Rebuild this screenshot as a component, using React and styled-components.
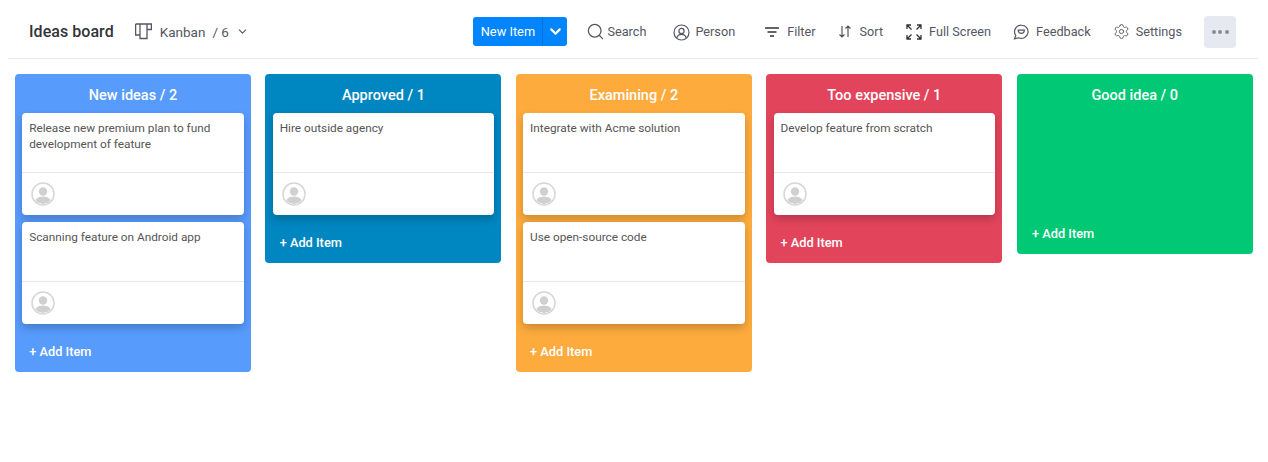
import React from "react";
import styled, { createGlobalStyle } from "styled-components";
import { ChevronDown, Search, Settings } from "lucide-react";

const GlobalStyle = createGlobalStyle`
  body {
    margin: 0;
    background: #fff;
    font-family: Roboto, "Liberation Sans", sans-serif;
  }
`;

const Page = styled.div`
  width: 1268px;
  height: 462px;
  overflow: hidden;
`;

const Header = styled.header`
  display: flex;
  align-items: center;
  height: 53px;
  margin: 0 10px 0 8px;
  padding: 5px 0 0 21px;
  border-bottom: 1px solid #e6e9ef;
`;

const Title = styled.h1`
  margin: 0 21px 0 0;
  font-size: 16px;
  font-weight: 500;
  color: #323338;
  letter-spacing: 0.05px;
`;

const ViewPicker = styled.div`
  display: flex;
  align-items: center;
  gap: 8px;
  font-size: 13.5px;
  color: #555663;
`;

const ViewCount = styled.span`
  margin: 0 -1px;
`;

const Actions = styled.div`
  display: flex;
  align-items: center;
  margin-left: auto;
`;

const NewItem = styled.div`
  display: flex;
  height: 29px;
  margin-right: 19px;
  border-radius: 3px;
  background: #0085ff;
  color: #fff;
  font-size: 12.8px;
`;

const NewItemLabel = styled.span`
  box-sizing: border-box;
  display: flex;
  align-items: center;
  justify-content: center;
  width: 70px;
  border-right: 1px solid #0073db;
`;

const NewItemCaret = styled.span`
  display: flex;
  align-items: center;
  justify-content: center;
  width: 24px;
`;

const Action = styled.div`
  display: flex;
  align-items: center;
  gap: ${p => p.$gap}px;
  margin-right: ${p => p.$space}px;
  font-size: 12.7px;
  color: #555663;
  white-space: nowrap;
`;

const MoreButton = styled.div`
  display: flex;
  align-items: center;
  justify-content: center;
  gap: 2.5px;
  width: 32px;
  height: 32px;
  margin-right: 22px;
  border-radius: 4px;
  background: #e6e9ef;
`;

const Dot = styled.span`
  width: 4px;
  height: 4px;
  border-radius: 50%;
  background: #8a8c99;
`;

const Board = styled.main`
  display: flex;
  align-items: flex-start;
  gap: 14.45px;
  padding: 15px 0 0 15px;
`;

const Column = styled.section`
  box-sizing: border-box;
  width: 236px;
  padding: 0 7.2px;
  border-radius: 4px;
  background: ${p => p.$color};
`;

const ColumnTitle = styled.h2`
  margin: 0;
  height: 39px;
  line-height: 44px;
  text-align: center;
  font-size: 14.5px;
  font-weight: 500;
  color: #fff;
`;

const CardList = styled.div`
  display: flex;
  flex-direction: column;
  gap: 7px;
  min-height: ${p => (p.$empty ? "100px" : "auto")};
`;

const Card = styled.article`
  display: flex;
  flex-direction: column;
  height: 102px;
  border-radius: 4px;
  background: #fff;
  box-shadow: 0 4px 8px rgba(0, 0, 0, 0.2);
`;

const CardText = styled.p`
  box-sizing: border-box;
  height: 60px;
  margin: 0;
  padding: 7px 7px 0;
  border-bottom: 1px solid #e6e9ef;
  font-size: 11.8px;
  line-height: 16px;
  color: #555;
`;

const CardFooter = styled.div`
  display: flex;
  align-items: center;
  flex: 1;
  padding-left: 9px;
`;

const AddItem = styled.div`
  box-sizing: border-box;
  display: flex;
  align-items: center;
  height: ${p => (p.$empty ? "41px" : "48px")};
  padding: ${p => (p.$empty ? "0 0 0 8px" : "7px 0 0 7px")};
  font-size: 12.8px;
  font-weight: 500;
  color: #fff;
`;

const PersonGlyph = styled.svg`
  margin-top: 2px;
`;

const icon = { fill: "none", stroke: "#555663", strokeWidth: 1.2 };

const KanbanIcon = () => (
  <svg width="17" height="17" viewBox="0 0 17 17" {...icon} strokeWidth="1.3">
    <path d="M.6 1h15.800v5.500H12M.6 1v11H5M5 1v14.500h7V1" />
  </svg>
);

const PersonIcon = () => (
  <PersonGlyph width="17" height="17" viewBox="0 0 17 17" {...icon}>
    <circle cx="8.5" cy="8.5" r="7.5" />
    <circle cx="8.5" cy="7" r="2.6" />
    <path d="M3.8 14c.6-2.4 2.4-3.6 4.7-3.600s4.100 1.200 4.700 3.600" />
  </PersonGlyph>
);

const FilterIcon = () => (
  <svg width="16" height="14" viewBox="0 0 16 14" stroke="#323338" strokeWidth="1.6">
    <path d="M1 3h14M3.500 7h9M6 11h4" />
  </svg>
);

const SortIcon = () => (
  <svg width="14" height="15" viewBox="0 0 14 15" {...icon}>
    <path d="M4 2v11M1.500 10.500 4 13l2.500-2.500M10 13V2M7.500 4.500 10 2l2.500 2.500" />
  </svg>
);

const FullScreenIcon = () => (
  <svg width="16" height="16" viewBox="0 0 16 16" fill="none" stroke="#323338" strokeWidth="1.3">
    <path d="M1 5V1h4M1 1l4.500 4.500M11 1h4v4M15 1l-4.500 4.500M1 11v4h4M1 15l4.500-4.500M15 11v4h-4M15 15l-4.500-4.500" />
  </svg>
);

const FeedbackIcon = () => (
  <svg width="16" height="16" viewBox="0 0 16 16" {...icon}>
    <path d="M8.500 1.200a6.600 6.600 0 1 1-2.800 12.600L1.500 14.800l1.300-3.200A6.600 6.600 0 0 1 8.500 1.200z" />
    <path d="M5.200 6.200h6.200c-.2 2-1.400 3.200-3.100 3.200S5.400 8.200 5.200 6.200z" />
  </svg>
);

const Avatar = () => (
  <svg width="24" height="24" viewBox="0 0 24 24">
    <defs>
      <clipPath id="avatar-clip">
        <circle cx="12" cy="12" r="10" />
      </clipPath>
    </defs>
    <circle cx="12" cy="12" r="11" fill="#fff" stroke="#d6d6d6" strokeWidth="1.5" />
    <g clipPath="url(#avatar-clip)" fill="#d0d0d0">
      <circle cx="12" cy="9.500" r="4.200" />
      <path d="M3 24c0-6 3-9.500 9-9.500s9 3.500 9 9.500z" />
    </g>
  </svg>
);

const columns = [
  {
    title: "New ideas / 2",
    color: "#579bfc",
    cards: ["Release new premium plan to fund development of feature", "Scanning feature on Android app"]
  },
  { title: "Approved / 1", color: "#0086c0", cards: ["Hire outside agency"] },
  {
    title: "Examining / 2",
    color: "#fdab3d",
    cards: ["Integrate with Acme solution", "Use open-source code"]
  },
  { title: "Too expensive / 1", color: "#e2445c", cards: ["Develop feature from scratch"] },
  { title: "Good idea / 0", color: "#00c875", cards: [] }
];

export default function App() {
  return (
    <Page>
      <GlobalStyle />
      <Header>
        <Title>Ideas board</Title>
        <ViewPicker>
          <KanbanIcon />
          Kanban
          <ViewCount>/ 6</ViewCount>
          <ChevronDown size={13} color="#555663" />
        </ViewPicker>
        <Actions>
          <NewItem>
            <NewItemLabel>New Item</NewItemLabel>
            <NewItemCaret>
              <ChevronDown size={17} strokeWidth={3} color="#fff" />
            </NewItemCaret>
          </NewItem>
          <Action $space={27} $gap={2}>
            <Search size={19} color="#555663" strokeWidth={1.6} />
            Search
          </Action>
          <Action $space={29} $gap={5}>
            <PersonIcon />
            Person
          </Action>
          <Action $space={22} $gap={7}>
            <FilterIcon />
            Filter
          </Action>
          <Action $space={23} $gap={8}>
            <SortIcon />
            Sort
          </Action>
          <Action $space={22} $gap={7}>
            <FullScreenIcon />
            Full Screen
          </Action>
          <Action $space={22} $gap={7}>
            <FeedbackIcon />
            Feedback
          </Action>
          <Action $space={22} $gap={6}>
            <Settings size={17} color="#555663" strokeWidth={1.3} />
            Settings
          </Action>
          <MoreButton>
            <Dot />
            <Dot />
            <Dot />
          </MoreButton>
        </Actions>
      </Header>
      <Board>
        {columns.map(col => {
          const empty = col.cards.length === 0;
          return (
            <Column key={col.title} $color={col.color}>
              <ColumnTitle>{col.title}</ColumnTitle>
              <CardList $empty={empty}>
                {col.cards.map(text => (
                  <Card key={text}>
                    <CardText>{text}</CardText>
                    <CardFooter>
                      <Avatar />
                    </CardFooter>
                  </Card>
                ))}
              </CardList>
              <AddItem $empty={empty}>+ Add Item</AddItem>
            </Column>
          );
        })}
      </Board>
    </Page>
  );
}
